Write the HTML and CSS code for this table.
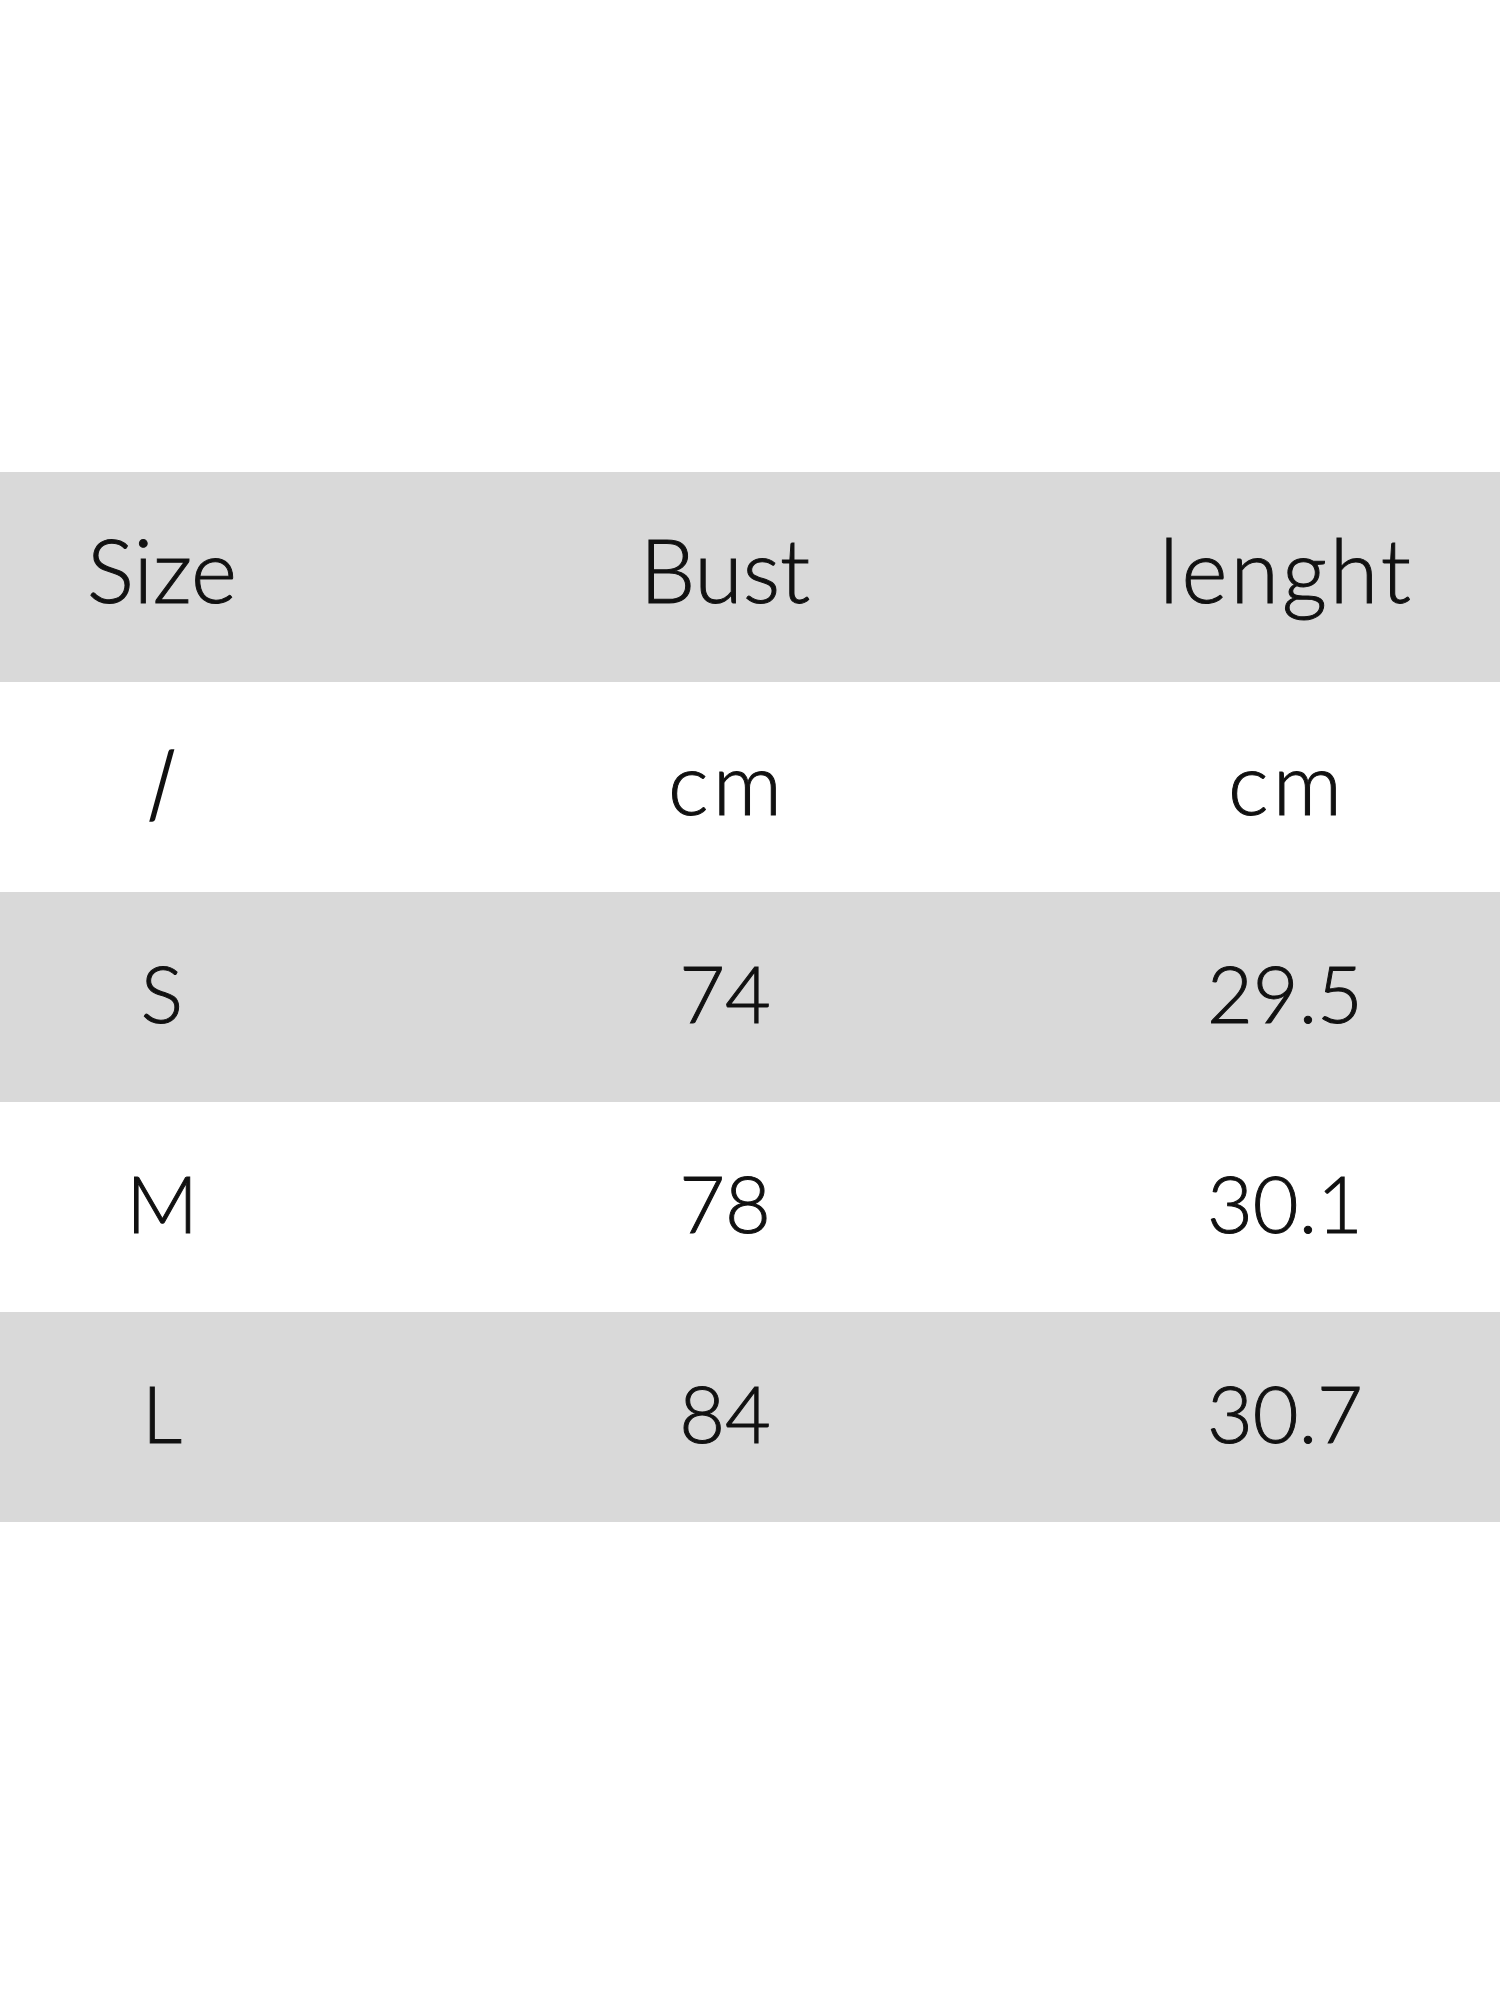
FILE: index.html
```html
<!DOCTYPE html>
<html lang="en">
<head>
<meta charset="utf-8">
<title>Size chart</title>
<link rel="stylesheet" href="styles.css">
</head>
<body>
<main class="page">
  <div class="chart">
    <div class="row shade head">
      <div class="cell">Size</div>
      <div class="cell">Bust</div>
      <div class="cell wide">lenght</div>
    </div>
    <div class="row">
      <div class="cell slash">/</div>
      <div class="cell unit">cm</div>
      <div class="cell unit">cm</div>
    </div>
    <div class="row shade">
      <div class="cell">S</div>
      <div class="cell">74</div>
      <div class="cell">29.5</div>
    </div>
    <div class="row">
      <div class="cell">M</div>
      <div class="cell">78</div>
      <div class="cell">30.1</div>
    </div>
    <div class="row shade">
      <div class="cell">L</div>
      <div class="cell">84</div>
      <div class="cell">30.7</div>
    </div>
  </div>
</main>
</body>
</html>
```
FILE: styles.css
```css
html, body {
  margin: 0;
  padding: 0;
  background: #ffffff;
}

.page {
  width: 1500px;
  height: 2000px;
  padding-top: 472px;
  box-sizing: border-box;
  font-family: "Lato", "DejaVu Sans", sans-serif;
  font-weight: 300;
  color: #111111;
  -webkit-text-stroke: 1px #111111;
}

.chart {
  display: flex;
  flex-direction: column;
}

.row {
  display: grid;
  grid-template-columns: 324px 802px 318px;
  height: 210px;
  align-items: center;
  font-size: 79px;
  line-height: 1;
}

.row.shade {
  background: #d9d9d9;
}

.row.head {
  font-size: 88px;
}

.cell {
  text-align: center;
  padding-bottom: 10px;
}

.head .cell {
  padding-bottom: 16px;
}

.cell.wide {
  letter-spacing: 3px;
  padding-left: 3px;
}

.cell.unit {
  font-size: 86px;
  letter-spacing: 4px;
  padding-left: 4px;
}

.cell.slash {
  font-size: 92px;
  transform: skewX(8deg);
  -webkit-text-stroke: 1.6px #111111;
}
```
